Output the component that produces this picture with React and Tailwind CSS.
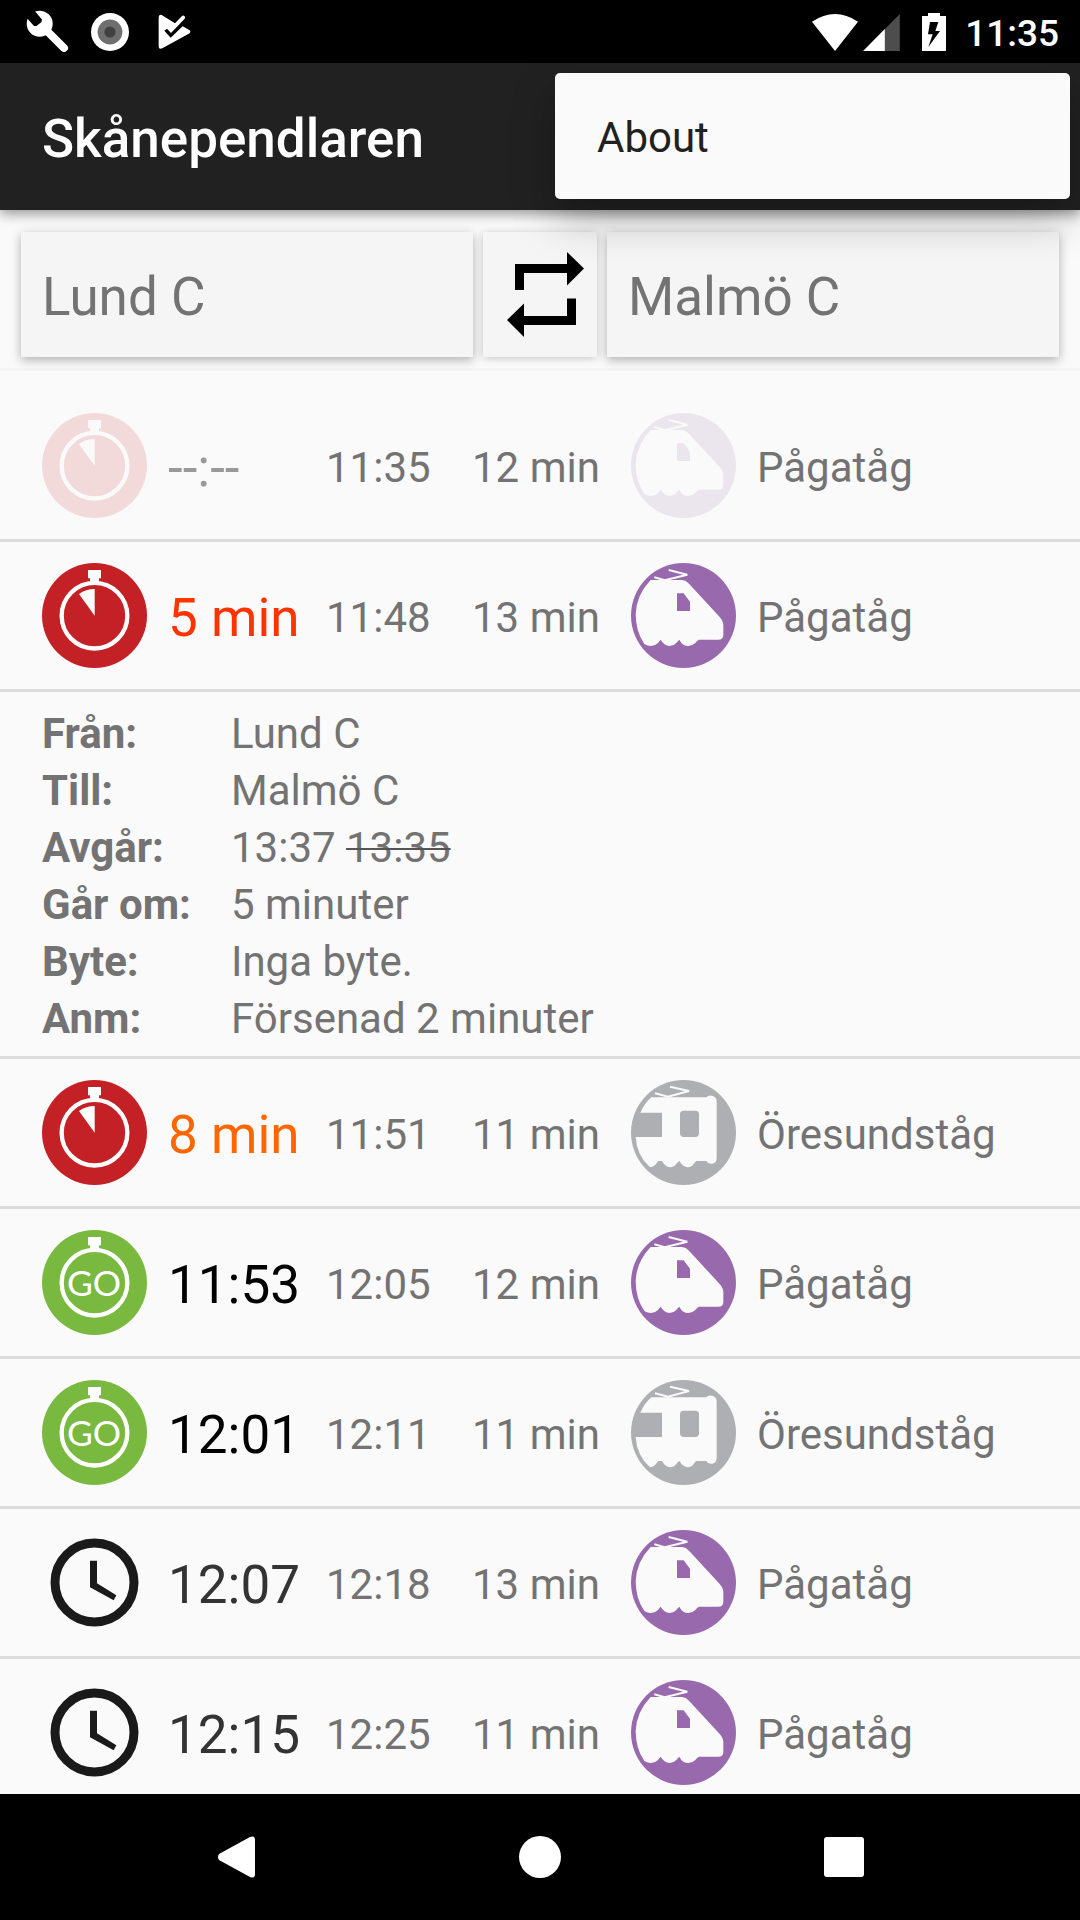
import React from "react";

const departures = [
  { icon: "soon", time: "--:--", timeClass: "text-[#999999]", arrival: "11:35", duration: "12 min", train: "Pågatåg", faded: true },
  { icon: "soon", time: "5 min", timeClass: "text-[#ff3300]", arrival: "11:48", duration: "13 min", train: "Pågatåg", open: true },
  { icon: "soon", time: "8 min", timeClass: "text-[#ff6600]", arrival: "11:51", duration: "11 min", train: "Öresundståg" },
  { icon: "go", time: "11:53", timeClass: "text-black", arrival: "12:05", duration: "12 min", train: "Pågatåg" },
  { icon: "go", time: "12:01", timeClass: "text-black", arrival: "12:11", duration: "11 min", train: "Öresundståg" },
  { icon: "later", time: "12:07", timeClass: "text-[#333333]", arrival: "12:18", duration: "13 min", train: "Pågatåg" },
  { icon: "later", time: "12:15", timeClass: "text-[#333333]", arrival: "12:25", duration: "11 min", train: "Pågatåg" },
];

const details = [
  ["Från:", "Lund C"],
  ["Till:", "Malmö C"],
  ["Avgår:", <>13:37 <s className="decoration-[2px] decoration-[#555555]">13:35</s></>],
  ["Går om:", "5 minuter"],
  ["Byte:", "Inga byte."],
  ["Anm:", "Försenad 2 minuter"],
];

function Stopwatch({ color, children }) {
  return (
    <svg viewBox="0 0 315 315" className="size-[105px]" aria-hidden="true">
      <circle cx="157.5" cy="157.5" r="157.5" fill={color} />
      <circle cx="157.5" cy="158" r="98.5" fill="none" stroke="#fff" strokeWidth="13" />
      <path d="M138 21H177V46H171V56H144V46H138Z" fill="#fff" />
      {children}
    </svg>
  );
}

function StatusIcon({ kind }) {
  if (kind === "soon") {
    return (
      <Stopwatch color="#c42127">
        <path d="M158 158L111 93Q132 78 158 78Z" fill="#fff" />
      </Stopwatch>
    );
  }
  if (kind === "go") {
    return (
      <Stopwatch color="#7ab93f">
        <text x="156" y="197" textAnchor="middle" fill="#fff" fontSize="106" className="font-[Lato,sans-serif] font-normal">
          GO
        </text>
      </Stopwatch>
    );
  }
  return (
    <svg viewBox="0 0 315 315" className="size-[105px]" aria-hidden="true">
      <circle cx="157.5" cy="157.5" r="118.5" fill="none" stroke="#1a1a1a" strokeWidth="27" />
      <path d="M144 92H165V160L223 196L215 211L144 172Z" fill="#1a1a1a" />
    </svg>
  );
}

function TrainIcon({ train }) {
  if (train === "Pågatåg") {
    return (
      <svg viewBox="93 69 315 315" className="size-[105px]" aria-hidden="true">
        <circle cx="250.5" cy="226.5" r="157.5" fill="#986aad" />
        <path
          d="M152 120H246Q258 121 267 131L357 229Q370 243 370 256V284Q370 299 355 299H297Q291 301 286 309Q277 318 265 318Q247 318 238 299Q233 303 229 309Q221 318 209 318Q192 317 182 299Q178 303 174 309Q165 318 153 318Q142 318 133 312Q107 275 107 222Q109 165 152 120Z"
          fill="#fafafa"
        />
        <path d="M231 160H251L270 185V213H231Z" fill="#986aad" />
        <path d="M206 90L262 104L194 121L163 112" fill="none" stroke="#fafafa" strokeWidth="6" />
      </svg>
    );
  }
  return (
    <svg viewBox="93 60 315 315" className="size-[105px]" aria-hidden="true">
      <circle cx="250.5" cy="217.5" r="157.5" fill="#aeafb3" />
      <path
        d="M154 112H319Q324 105 336 107Q350 110 350 124V295Q350 309 337 311Q324 312 319 303H289Q284 307 281 312Q274 322 263 322Q249 321 238 303Q233 306 229 312Q221 322 210 322Q196 321 186 303H175Q171 308 166 314Q160 321 150 322Q110 286 107 231H186V158H121Q133 130 154 112Z"
        fill="#fafafa"
      />
      <rect x="240" y="152" width="57" height="79" rx="11" fill="#aeafb3" />
      <path d="M210 80L267 93L204 110L165 100" fill="none" stroke="#fafafa" strokeWidth="6" />
    </svg>
  );
}

function StatusBar() {
  return (
    <div className="flex h-[63px] shrink-0 items-center justify-between bg-black pr-[21px] pl-[26px] text-white">
      <div className="flex items-center">
        <svg viewBox="26 10 44 44" className="size-[44px]" aria-label="Developer mode">
          <circle cx="39.7" cy="23.7" r="13" fill="#fff" />
          <path d="M26 13L33 9L42 19.5L41.5 22L36.5 26H34L26 17Z" fill="#000" />
          <path d="M45 29L64 48" stroke="#fff" strokeWidth="8" strokeLinecap="round" />
        </svg>
        <svg viewBox="0 0 38 38" className="ml-[21px] size-[38px]" aria-label="Recording">
          <circle cx="19" cy="19" r="19" fill="#fff" />
          <circle cx="19" cy="19" r="12.4" fill="#6f6f6f" />
          <circle cx="19" cy="19" r="5.6" fill="#404040" />
        </svg>
        <svg viewBox="470 40 105 108" className="ml-[28px] h-[36px] w-[35px]" aria-label="Task done">
          <path
            d="M484 43L524 68L545 46Q549 43 553 47Q556 51 553 54L512 97L500 84L492 90L511 111L547 77L568 89Q573 94 568 98L486 143Q475 147 475 138V50Q475 40 484 43Z"
            fill="#fff"
          />
        </svg>
      </div>
      <div className="flex items-center">
        <svg viewBox="276 36 138 114" className="h-[38px] w-[46px]" aria-label="Wi-Fi">
          <path d="M276 62Q345 16 414 62L345 150Z" fill="#fff" />
        </svg>
        <svg viewBox="430 36 110 114" className="ml-[5px] h-[38px] w-[37px]" aria-label="Signal">
          <path d="M430 150H540V39Z" fill="#4d4d4d" />
          <path d="M430 150H495V84Z" fill="#fff" />
        </svg>
        <svg viewBox="606 36 72 114" className="ml-[22px] h-[38px] w-[24px]" aria-label="Battery charging">
          <path d="M606 45H624V36H660V45H678V150H606Z" fill="#fff" />
          <path d="M630 63H655L646 90H660L625 138L638 100H624Z" fill="#000" />
        </svg>
        <span className="pt-1 pl-[19px] text-[37px] leading-none font-medium">11:35</span>
      </div>
    </div>
  );
}

function AppBar() {
  return (
    <header className="relative z-10 flex h-[147px] shrink-0 items-center bg-[#212121] px-[42px] shadow-[0_4px_12px_rgba(0,0,0,0.4)]">
      <h1 className="pt-1.5 text-[53px] leading-none font-medium text-white">Skånependlaren</h1>
      <div className="absolute top-[10px] right-[10px] w-[515px] max-w-full rounded-[5px] bg-[#fafafa] shadow-[0_20px_44px_rgba(0,0,0,0.26)]" role="menu">
        <button type="button" role="menuitem" className="flex h-[126px] w-full items-center px-[42px] pt-1 text-[42px] leading-none text-[#212121]">
          About
        </button>
      </div>
    </header>
  );
}

function StationButton({ children }) {
  return (
    <button type="button" className="flex h-[125px] min-w-0 flex-1 items-center bg-[#f5f5f5] px-[21px] pt-1.5 text-[53px] leading-none text-[#737373] shadow-[0_3px_10px_rgba(0,0,0,0.3)]">
      {children}
    </button>
  );
}

function RoutePicker() {
  return (
    <section className="flex gap-[10px] border-b-[3px] border-[#f5f5f5] px-[21px] pt-[22px] pb-[11px]">
      <StationButton>Lund C</StationButton>
      <button type="button" aria-label="Byt riktning" className="flex h-[125px] w-[114px] items-center justify-center bg-[#f5f5f5] pl-[11px] shadow-[0_1px_8px_rgba(0,0,0,0.22)]">
        <svg viewBox="507 252 77 85" className="h-[85px] w-[77px]" aria-hidden="true">
          <path d="M515 264H567V252L584 268.500L567 285.500V273H524V290H515Z" />
          <path d="M576 325H524V337L507 320L524 303.500V316H567V298.500H576Z" />
        </svg>
      </button>
      <StationButton>Malmö C</StationButton>
    </section>
  );
}

function Departure({ item }) {
  return (
    <li>
      <button
        type="button"
        aria-expanded={Boolean(item.open)}
        className="grid h-[150px] w-full grid-cols-[126px_158px_146px_159px_126px_1fr] items-center border-b-[3px] border-[#dcdcdc] px-[42px] text-left text-[42px] leading-none whitespace-nowrap"
      >
        <span className={item.faded ? "opacity-[0.14]" : ""}>
          <StatusIcon kind={item.icon} />
        </span>
        <span className={"pt-1.5 text-[53px] " + item.timeClass}>{item.time}</span>
        <span className="pt-1">{item.arrival}</span>
        <span className="pt-1">{item.duration}</span>
        <span className={item.faded ? "opacity-[0.14]" : ""}>
          <TrainIcon train={item.train} />
        </span>
        <span className="pt-1">{item.train}</span>
      </button>
      {item.open && (
        <dl className="grid grid-cols-[189px_1fr] border-b-[3px] border-[#dcdcdc] px-[42px] pt-[13px] pb-[9px] text-[42px] leading-[57px]">
          {details.map(([label, value]) => (
            <React.Fragment key={label}>
              <dt className="font-bold">{label}</dt>
              <dd>{value}</dd>
            </React.Fragment>
          ))}
        </dl>
      )}
    </li>
  );
}

function NavBar() {
  return (
    <nav className="grid h-[126px] shrink-0 grid-cols-3 bg-black px-[84px]">
      <button type="button" aria-label="Back" className="flex items-center justify-center">
        <svg viewBox="0 0 37 42" className="h-[42px] w-[37px]">
          <path d="M1 18L32 1Q37 -1 37 4V38Q37 43 32 41L1 24Q-1 21 1 18Z" fill="#fff" />
        </svg>
      </button>
      <button type="button" aria-label="Home" className="flex items-center justify-center">
        <span className="size-[42px] rounded-full bg-white" />
      </button>
      <button type="button" aria-label="Overview" className="flex items-center justify-center">
        <span className="size-[40px] rounded-[3px] bg-white" />
      </button>
    </nav>
  );
}

export default function App() {
  return (
    <div className="flex h-screen flex-col bg-[#fafafa] font-[Roboto,sans-serif] text-[#737373]">
      <StatusBar />
      <AppBar />
      <main className="min-h-0 flex-1 overflow-y-auto [scrollbar-width:none]">
        <RoutePicker />
        <ul className="pt-[21px]">
          {departures.map((item) => (
            <Departure key={item.time} item={item} />
          ))}
        </ul>
      </main>
      <NavBar />
    </div>
  );
}
